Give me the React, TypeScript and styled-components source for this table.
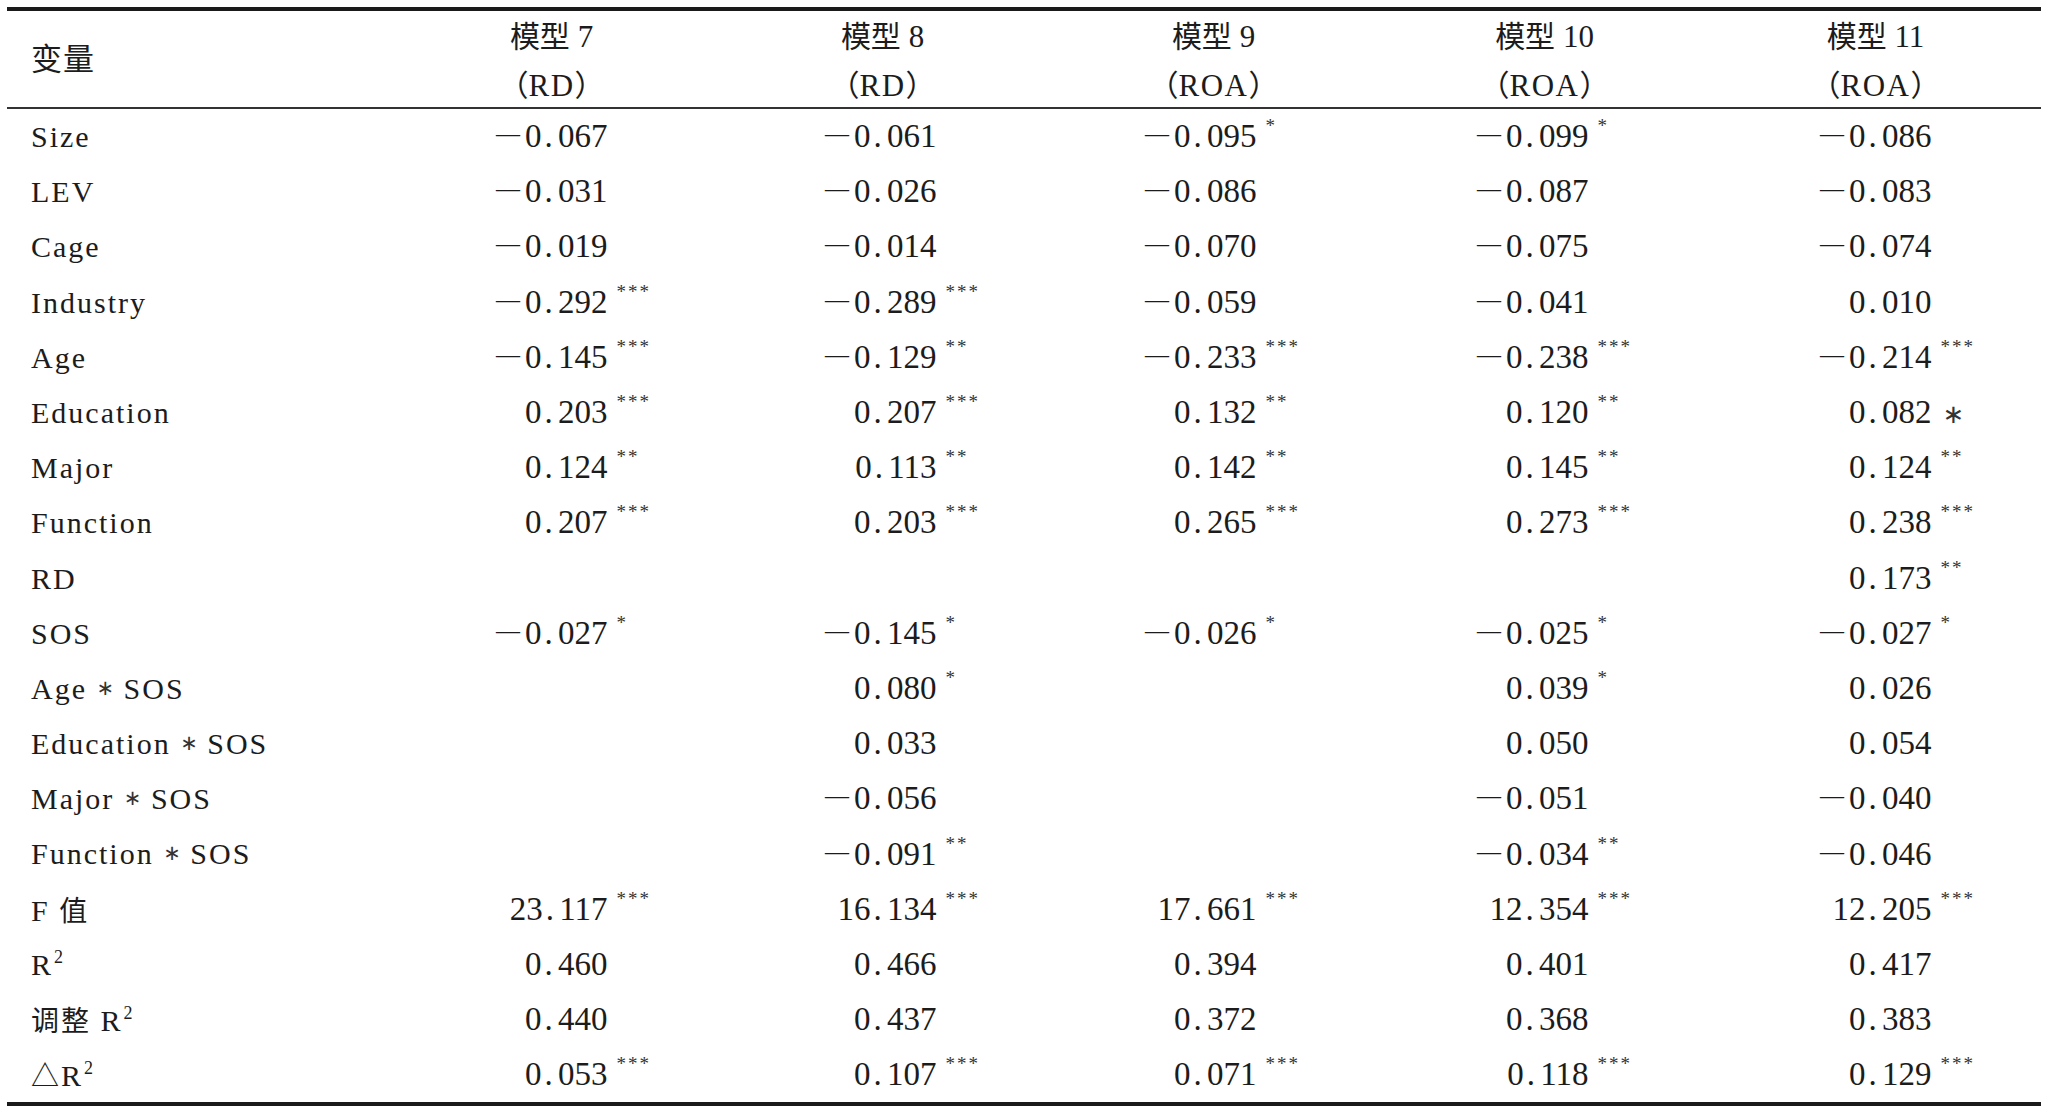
import React from "react";
import styled, { createGlobalStyle } from "styled-components";

const GlobalStyle = createGlobalStyle`
  html, body {
    margin: 0;
    padding: 0;
    background: #ffffff;
  }
  body {
    font-family: "Liberation Serif", "Noto Sans CJK SC", serif;
    color: #1c1c1c;
    text-spacing-trim: space-all;
  }
`;

const COLS = "379px repeat(5, 331px)";

const Table = styled.div`
  margin: 7px 0 0 7px;
  width: 2034px;
  border-top: 4px solid #1a1a1a;
  border-bottom: 4px solid #1a1a1a;
`;

const HeadRow = styled.div`
  display: grid;
  grid-template-columns: ${COLS};
  height: 96px;
  border-bottom: 2px solid #333;
`;

const HeadLabel = styled.div`
  display: flex;
  align-items: center;
  padding: 0 0 8px 24px;
  font-family: "Noto Sans CJK SC", sans-serif;
  font-size: 31px;
  letter-spacing: 1px;
`;

const HeadModel = styled.div`
  display: flex;
  flex-direction: column;
  align-items: center;
  line-height: 47px;
  font-family: "Liberation Serif", serif;
  font-size: 31px;
  white-space: pre;
`;

const Cjk = styled.span<{ $size?: number }>`
  font-family: "Noto Sans CJK SC", sans-serif;
  font-size: ${(p) => p.$size ?? 28}px;
  text-spacing-trim: space-all;
`;

const DepVar = styled.span`
  letter-spacing: 1.5px;
`;

const Body = styled.div`
  display: grid;
  grid-template-columns: ${COLS};
  grid-auto-rows: 55.2px;
`;

const Label = styled.div`
  padding-left: 24px;
  font-family: "Liberation Serif", "Noto Sans CJK SC", serif;
  font-size: 30px;
  line-height: 55px;
  letter-spacing: 2px;
  white-space: pre;
`;

const Ast = styled.span`
  font-family: "DejaVu Sans", sans-serif;
  font-size: 21px;
  line-height: 0;
  letter-spacing: 0;
  vertical-align: 4px;
  color: #333;
`;

const Sq = styled.span`
  font-size: 18px;
  line-height: 0;
  vertical-align: 12px;
  margin-left: 1px;
`;

const Cell = styled.div<{ $shift: number }>`
  display: flex;
  align-items: center;
  justify-content: center;
  padding-left: ${(p) => Math.max(0, p.$shift * 2)}px;
  padding-right: ${(p) => Math.max(0, -p.$shift * 2)}px;
`;

const Num = styled.div`
  width: 112px;
  text-align: right;
  white-space: nowrap;
  font-family: "Liberation Serif", serif;
  font-size: 33px;
  line-height: 55px;
`;

const Dot = styled.span`
  display: inline-block;
  width: 16.5px;
  text-align: left;
  padding-left: 3px;
  box-sizing: border-box;
`;

const Minus = styled.span`
  display: inline-block;
  width: 29px;
  text-align: left;
  font-size: 24px;
  line-height: 0;
  vertical-align: 6px;
`;

const StarSlot = styled.span`
  display: inline-block;
  width: 0;
  line-height: 0;
  white-space: nowrap;
  text-align: left;
`;

const Stars = styled.span<{ $inline?: boolean }>`
  display: inline-block;
  line-height: 0;
  margin-left: ${(p) => (p.$inline ? 11 : 9)}px;
  font-family: ${(p) => (p.$inline ? '"DejaVu Sans", sans-serif' : '"Liberation Serif", serif')};
  font-size: ${(p) => (p.$inline ? 26 : 19)}px;
  letter-spacing: ${(p) => (p.$inline ? 0 : 2)}px;
  vertical-align: ${(p) => (p.$inline ? 0 : 15)}px;
  color: #333;
`;

type Val = string;

const SHIFTS = [0, -2, -13, -12, 0];

const models = [
  { n: "7", dv: "RD" },
  { n: "8", dv: "RD" },
  { n: "9", dv: "ROA" },
  { n: "10", dv: "ROA" },
  { n: "11", dv: "ROA" },
];

type Row = { label: React.ReactNode; vals: Val[] };

const S = (a: string) => (
  <>
    {a + " "}
    <Ast>∗</Ast>
    {" SOS"}
  </>
);

const rows: Row[] = [
  { label: "Size", vals: ["-0.067", "-0.061", "-0.095*", "-0.099*", "-0.086"] },
  { label: "LEV", vals: ["-0.031", "-0.026", "-0.086", "-0.087", "-0.083"] },
  { label: "Cage", vals: ["-0.019", "-0.014", "-0.070", "-0.075", "-0.074"] },
  { label: "Industry", vals: ["-0.292***", "-0.289***", "-0.059", "-0.041", "0.010"] },
  { label: "Age", vals: ["-0.145***", "-0.129**", "-0.233***", "-0.238***", "-0.214***"] },
  { label: "Education", vals: ["0.203***", "0.207***", "0.132**", "0.120**", "0.082 ∗"] },
  { label: "Major", vals: ["0.124**", "0.113**", "0.142**", "0.145**", "0.124**"] },
  { label: "Function", vals: ["0.207***", "0.203***", "0.265***", "0.273***", "0.238***"] },
  { label: "RD", vals: ["", "", "", "", "0.173**"] },
  { label: "SOS", vals: ["-0.027*", "-0.145*", "-0.026*", "-0.025*", "-0.027*"] },
  { label: S("Age"), vals: ["", "0.080*", "", "0.039*", "0.026"] },
  { label: S("Education"), vals: ["", "0.033", "", "0.050", "0.054"] },
  { label: S("Major"), vals: ["", "-0.056", "", "-0.051", "-0.040"] },
  { label: S("Function"), vals: ["", "-0.091**", "", "-0.034**", "-0.046"] },
  {
    label: (
      <>
        {"F "}
        <Cjk>值</Cjk>
      </>
    ),
    vals: ["23.117***", "16.134***", "17.661***", "12.354***", "12.205***"],
  },
  {
    label: (
      <>
        R<Sq>2</Sq>
      </>
    ),
    vals: ["0.460", "0.466", "0.394", "0.401", "0.417"],
  },
  {
    label: (
      <>
        <Cjk>调整</Cjk>
        {" R"}
        <Sq>2</Sq>
      </>
    ),
    vals: ["0.440", "0.437", "0.372", "0.368", "0.383"],
  },
  {
    label: (
      <>
        <Cjk>△</Cjk>R<Sq>2</Sq>
      </>
    ),
    vals: ["0.053***", "0.107***", "0.071***", "0.118***", "0.129***"],
  },
];

function Value({ v }: { v: Val }) {
  if (!v) return <Num />;
  const inline = v.includes("∗");
  const m = v.replace(" ∗", "").match(/^(-?)(\d+)\.(\d+)(\**)$/);
  if (!m) return <Num>{v}</Num>;
  const [, neg, ip, fp, stars] = m;
  return (
    <Num>
      {neg && <Minus>—</Minus>}
      {ip}
      <Dot>.</Dot>
      {fp}
      <StarSlot>
        {inline ? <Stars $inline>∗</Stars> : stars ? <Stars>{stars}</Stars> : null}
      </StarSlot>
    </Num>
  );
}

export default function App() {
  return (
    <>
      <GlobalStyle />
      <Table>
        <HeadRow>
          <HeadLabel>变量</HeadLabel>
          {models.map((m) => (
            <HeadModel key={m.n}>
              <span>
                <Cjk $size={30}>模型</Cjk>
                {" " + m.n}
              </span>
              <span>
                <Cjk $size={30}>（</Cjk>
                <DepVar>{m.dv}</DepVar>
                <Cjk $size={30}>）</Cjk>
              </span>
            </HeadModel>
          ))}
        </HeadRow>
        <Body>
          {rows.map((r, i) => (
            <React.Fragment key={i}>
              <Label>{r.label}</Label>
              {r.vals.map((v, j) => (
                <Cell key={j} $shift={SHIFTS[j]}>
                  <Value v={v} />
                </Cell>
              ))}
            </React.Fragment>
          ))}
        </Body>
      </Table>
    </>
  );
}
